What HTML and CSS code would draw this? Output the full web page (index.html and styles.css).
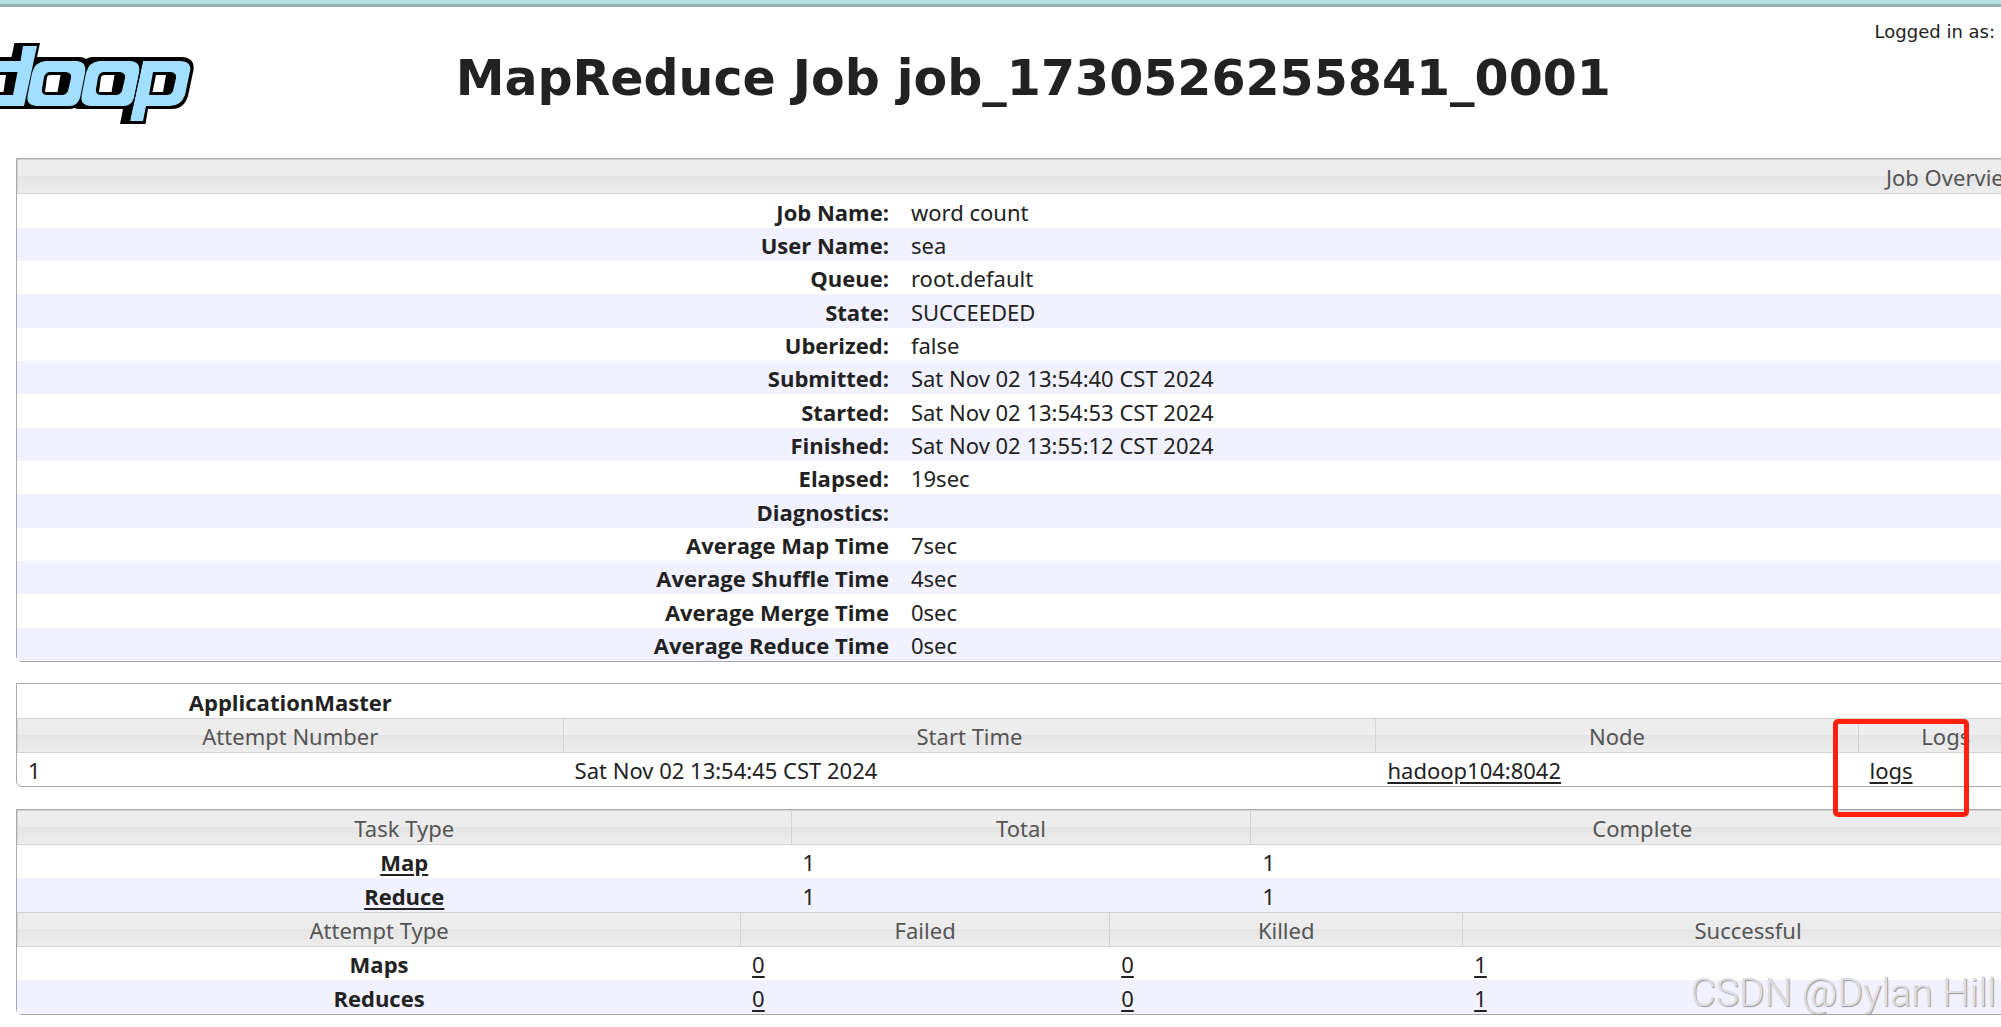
FILE: index.html
```html
<!DOCTYPE html>
<html lang="en">
<head>
    <meta charset="UTF-8">
    <meta name="viewport" content="width=device-width, initial-scale=1.0">
    <title>MapReduce Job job_1730526255841_0001</title>
    <link rel="stylesheet" href="styles.css">
</head>
<body>
    <header class="page-header">
        <svg class="logo" viewBox="0 0 200 90" role="img" aria-label="Hadoop">
            <path fill="#000" d="M-5 21 L11.500 21 L14.500 7 L40 7 L37 21 L80 21 Q84 21 86 23 Q89 21 93 21 L182 21 Q195 22 193.500 34 L188 60 Q184 73 172 73 L148 73 L145.500 88 L120 88 L123 73 L80 73 Q76 73 74.500 72 Q72 73 69 73 L-5 73 Z"/>
            <path fill="#a0dfff" d="M-5 25 L20.500 25 L23 10 L37 10 L24 70 L-5 70 L-5 59 L13 59 L17.500 36 L-5 36 Z"/>
            <path fill="#fff" d="M-5 39 L6 39 L3.500 56 L-5 56 Z"/>
            <path fill="#a0dfff" d="M45 25 L77 25 Q87 26 85 37 L80 62 Q77 70 70 70 L36 70 Q26 69 27.500 60 L32 37 Q35 26 45 25 Z"/>
            <path fill="#000" d="M50 36 L66 36 Q72 37 71 42 L68 55 Q66 59 62 59 L46 59 Q41 58 42 53 L44 41 Q46 36 50 36 Z"/>
            <path fill="#fff" d="M50 39 L60.500 39 L57.500 56 L45 56 L47 41 Q48 39 50 39 Z"/>
            <path fill="#a0dfff" d="M99 25 L131 25 Q141 26 139 37 L134 62 Q131 70 124 70 L90 70 Q80 69 81.500 60 L86 37 Q89 26 99 25 Z"/>
            <path fill="#000" d="M104 36 L120 36 Q126 37 125 42 L122 55 Q120 59 116 59 L100 59 Q95 58 96 53 L98 41 Q100 36 104 36 Z"/>
            <path fill="#fff" d="M104 39 L114.500 39 L111.500 56 L99 56 L101 41 Q102 39 104 39 Z"/>
            <path fill="#a0dfff" d="M143 25 L181 25 Q192 26 190 35 L185 59 Q181 70 170 70 L146 70 L143 85 L130 85 Z"/>
            <path fill="#000" d="M153 36 L171 36 Q177 37 176 42 L173 55 Q171 59 167 59 L149 59 Z"/>
            <path fill="#fff" d="M156 39 L166 39 L163 56 L152.500 56 Z"/>
            <path fill="none" stroke="#000" d="M142.500 25 L129.500 85"/>
        </svg>
        <h1 class="title">MapReduce Job job_1730526255841_0001</h1>
        <div class="user">Logged in as:</div>
    </header>

    <main class="content">
        <div class="box">
            <table class="info">
                <colgroup><col class="info-label"><col></colgroup>
                <thead>
                    <tr><th colspan="2">Job Overview</th></tr>
                </thead>
                <tbody>
                    <tr><th>Job Name:</th><td>word count</td></tr>
                    <tr><th>User Name:</th><td>sea</td></tr>
                    <tr><th>Queue:</th><td>root.default</td></tr>
                    <tr><th>State:</th><td>SUCCEEDED</td></tr>
                    <tr><th>Uberized:</th><td>false</td></tr>
                    <tr><th>Submitted:</th><td>Sat Nov 02 13:54:40 CST 2024</td></tr>
                    <tr><th>Started:</th><td>Sat Nov 02 13:54:53 CST 2024</td></tr>
                    <tr><th>Finished:</th><td>Sat Nov 02 13:55:12 CST 2024</td></tr>
                    <tr><th>Elapsed:</th><td>19sec</td></tr>
                    <tr><th>Diagnostics:</th><td></td></tr>
                    <tr><th>Average Map Time</th><td>7sec</td></tr>
                    <tr><th>Average Shuffle Time</th><td>4sec</td></tr>
                    <tr><th>Average Merge Time</th><td>0sec</td></tr>
                    <tr><th>Average Reduce Time</th><td>0sec</td></tr>
                </tbody>
            </table>
        </div>

        <div class="box">
            <table>
                <colgroup><col class="am-attempt"><col class="am-start"><col class="am-node"><col></colgroup>
                <thead>
                    <tr class="caption"><th>ApplicationMaster</th><td colspan="3"></td></tr>
                    <tr><th>Attempt Number</th><th>Start Time</th><th>Node</th><th>Logs</th></tr>
                </thead>
                <tbody>
                    <tr>
                        <td>1</td>
                        <td>Sat Nov 02 13:54:45 CST 2024</td>
                        <td><a href="#">hadoop104:8042</a></td>
                        <td><a href="#">logs</a></td>
                    </tr>
                </tbody>
            </table>
            <div class="highlight"></div>
        </div>

        <div class="box">
            <table>
                <colgroup><col class="task-type"><col class="task-total"><col></colgroup>
                <thead>
                    <tr><th>Task Type</th><th>Total</th><th>Complete</th></tr>
                </thead>
                <tbody>
                    <tr><th><a href="#">Map</a></th><td>1</td><td>1</td></tr>
                    <tr><th><a href="#">Reduce</a></th><td>1</td><td>1</td></tr>
                </tbody>
            </table>
            <table>
                <colgroup><col class="try-type"><col class="try-failed"><col class="try-killed"><col></colgroup>
                <thead>
                    <tr><th>Attempt Type</th><th>Failed</th><th>Killed</th><th>Successful</th></tr>
                </thead>
                <tbody>
                    <tr><th>Maps</th><td><a href="#">0</a></td><td><a href="#">0</a></td><td><a href="#">1</a></td></tr>
                    <tr><th>Reduces</th><td><a href="#">0</a></td><td><a href="#">0</a></td><td><a href="#">1</a></td></tr>
                </tbody>
            </table>
        </div>
    </main>
    <div class="watermark">CSDN @Dylan Hill</div>
</body>
</html>
```
FILE: styles.css
```css
* {
    box-sizing: border-box;
}

body {
    margin: 0;
    overflow: hidden;
    position: relative;
    border-top: 4px solid #b6e1e5;
    background: #fff;
    color: #222;
    font-family: "Noto Sans", "Open Sans", sans-serif;
    font-size: 22px;
    line-height: 31px;
}

a {
    color: #222;
    text-underline-offset: 3px;
}

.page-header {
    display: flex;
    align-items: flex-start;
    height: 154px;
    border-top: 3px solid #98b0b3;
    font-family: Verdana, "DejaVu Sans", sans-serif;
}

.logo {
    flex: none;
    width: 200px;
    height: 90px;
    margin-top: 29px;
}

.title {
    flex: 1;
    margin: 0;
    padding-top: 39px;
    padding-right: 8px;
    font-size: 49px;
    line-height: 66px;
    text-align: center;
    white-space: nowrap;
}

.user {
    flex: none;
    padding: 9px 6px 0 0;
    font-size: 18px;
    line-height: 32px;
}

/* the tables run past the right edge of the window */
.content {
    width: calc(100% + 34px);
    padding-left: 16px;
}

.box {
    position: relative;
    margin-bottom: 22px;
    border: 1px solid #aaa;
    border-radius: 0 0 6px 6px;
}

.box:first-child {
    margin-bottom: 21px;
}

table {
    width: 100%;
    table-layout: fixed;
    border-collapse: separate;
    border-spacing: 0;
}

th,
td {
    height: 33px;
    padding: 2px 11px 0;
    text-align: left;
    white-space: nowrap;
}

tbody th {
    font-family: "Open Sans", sans-serif;
    text-align: center;
}

thead th {
    height: 35px;
    border: 1px solid #d3d3d3;
    border-left-width: 0;
    background: linear-gradient(#ededed 50%, #e5e5e5 50%, #ededed);
    color: #555;
    font-weight: normal;
    text-align: center;
}

thead th:first-child {
    border-left-width: 1px;
}

tbody tr:nth-child(even) {
    background: #f1f1ff;
}

tbody tr:nth-child(even) th,
tbody tr:nth-child(even) td {
    height: 34px;
}

.info {
    width: 192%;
}

.info-label {
    width: 22.8%;
}

.info tbody th {
    text-align: right;
}

.info tbody tr th,
.info tbody tr td {
    height: 33px;
}

.info tbody tr:nth-child(3n+1) th,
.info tbody tr:nth-child(3n+1) td {
    height: 34px;
}

.caption th {
    height: 34px;
    border: 0;
    background: none;
    color: #222;
    font-family: "Open Sans", sans-serif;
    font-weight: bold;
}

.am-attempt {
    width: 27.1%;
}

.am-start {
    width: 40.3%;
}

.am-node {
    width: 23.9%;
}

.task-type {
    width: 38.4%;
}

.task-total {
    width: 22.8%;
}

.try-type {
    width: 35.9%;
}

.try-failed {
    width: 18.3%;
}

.try-killed {
    width: 17.5%;
}

.highlight {
    position: absolute;
    top: 35px;
    right: 65px;
    width: 136px;
    height: 98px;
    z-index: 1;
    border: 5px solid #ff2010;
    border-radius: 5px;
}

.watermark {
    position: absolute;
    right: 5px;
    bottom: 22px;
    color: #dedee2;
    font-family: Roboto, sans-serif;
    font-size: 39px;
    font-weight: 300;
    line-height: 44px;
    text-shadow: 1px 1px 1px #999;
}
```
